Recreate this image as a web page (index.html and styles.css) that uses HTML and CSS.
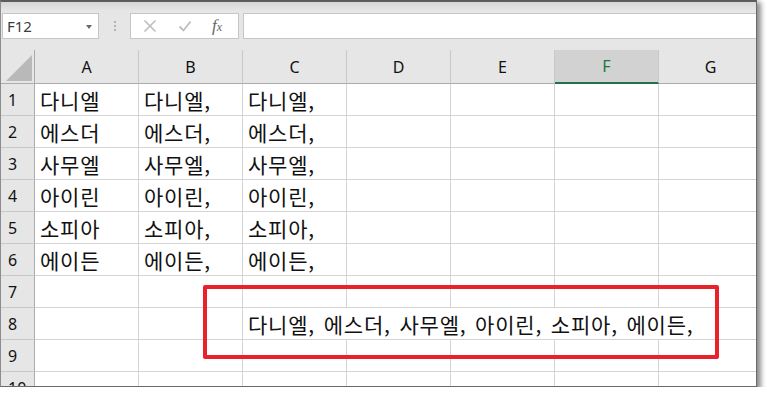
FILE: index.html
```html
<!DOCTYPE html>
<html lang="ko">
<head>
    <meta charset="UTF-8">
    <title>Excel - 텍스트 합치기</title>
    <link rel="stylesheet" href="styles.css">
</head>
<body>
    <div class="window">
        <div class="formula-bar">
            <div class="name-box"><span>F12</span><i class="caret"></i></div>
            <div class="grip"><i></i><i></i><i></i></div>
            <div class="fx-buttons">
                <svg class="ico" width="14" height="14" viewBox="0 0 14 14"><path d="M1.5 1.5L12.5 12.5M12.5 1.5L1.5 12.5" stroke="#bdbdbd" stroke-width="1.6" fill="none"/></svg>
                <svg class="ico" width="14" height="14" viewBox="0 0 14 14"><path d="M1.5 7.5L5.5 11.5L12.5 2.5" stroke="#bdbdbd" stroke-width="1.8" fill="none"/></svg>
                <span class="fx">f<small>x</small></span>
            </div>
            <div class="formula-input"></div>
        </div>
        <div class="sheet">
            <div class="corner"><svg width="34" height="34" viewBox="0 0 34 34"><polygon points="31,5 31,31 5,31" fill="#b9b9b9"/></svg></div>
            <div class="col-head">A</div>
            <div class="col-head">B</div>
            <div class="col-head">C</div>
            <div class="col-head">D</div>
            <div class="col-head">E</div>
            <div class="col-head on">F</div>
            <div class="col-head">G</div>

            <div class="row-head">1</div><div class="cell">다니엘</div><div class="cell">다니엘,</div><div class="cell">다니엘,</div><div class="cell"></div><div class="cell"></div><div class="cell"></div><div class="cell"></div>
            <div class="row-head">2</div><div class="cell">에스더</div><div class="cell">에스더,</div><div class="cell">에스더,</div><div class="cell"></div><div class="cell"></div><div class="cell"></div><div class="cell"></div>
            <div class="row-head">3</div><div class="cell">사무엘</div><div class="cell">사무엘,</div><div class="cell">사무엘,</div><div class="cell"></div><div class="cell"></div><div class="cell"></div><div class="cell"></div>
            <div class="row-head">4</div><div class="cell">아이린</div><div class="cell">아이린,</div><div class="cell">아이린,</div><div class="cell"></div><div class="cell"></div><div class="cell"></div><div class="cell"></div>
            <div class="row-head">5</div><div class="cell">소피아</div><div class="cell">소피아,</div><div class="cell">소피아,</div><div class="cell"></div><div class="cell"></div><div class="cell"></div><div class="cell"></div>
            <div class="row-head">6</div><div class="cell">에이든</div><div class="cell">에이든,</div><div class="cell">에이든,</div><div class="cell"></div><div class="cell"></div><div class="cell"></div><div class="cell"></div>
            <div class="row-head">7</div><div class="cell"></div><div class="cell"></div><div class="cell"></div><div class="cell"></div><div class="cell"></div><div class="cell"></div><div class="cell"></div>
            <div class="row-head">8</div><div class="cell"></div><div class="cell"></div><div class="cell span5">다니엘, 에스더, 사무엘, 아이린, 소피아, 에이든,</div>
            <div class="row-head">9</div><div class="cell"></div><div class="cell"></div><div class="cell"></div><div class="cell"></div><div class="cell"></div><div class="cell"></div><div class="cell"></div>
            <div class="row-head">10</div><div class="cell"></div><div class="cell"></div><div class="cell"></div><div class="cell"></div><div class="cell"></div><div class="cell"></div><div class="cell"></div>

            <div class="callout"></div>
        </div>
    </div>
</body>
</html>
```
FILE: styles.css
```css
* { margin: 0; padding: 0; box-sizing: border-box; }
body { background: #fff; font-family: "Noto Sans", "Noto Sans CJK KR", sans-serif; }

.window { width: 757px; height: 387px; border-top: 2px solid #5c5c5c; border-left: 1px solid #8c8c8c; border-right: 1px solid #6a6a6a; border-bottom: 1px solid #6a6a6a; overflow: hidden; box-shadow: 3px 3px 5px 1px rgba(0,0,0,.45); background: #fff; }

/* formula bar */
.formula-bar { height: 48px; display: flex; align-items: flex-start; padding: 11px 0 0 1px; background: linear-gradient(#d6d6d6, #e6e6e6 9px); }
.name-box { width: 97px; height: 26px; background: #fff; border: 1px solid #c6c6c6; display: flex; align-items: center; justify-content: space-between; padding: 0 6px 0 4px; font-size: 15px; color: #3c3c3c; }
.caret { width: 0; height: 0; border-left: 3.5px solid transparent; border-right: 3.5px solid transparent; border-top: 4px solid #6a6a6a; margin-top: 1px; }
.grip { width: 31px; height: 26px; display: flex; flex-direction: column; align-items: center; justify-content: center; gap: 2px; }
.grip i { width: 2px; height: 2px; background: #b3b3b3; }
.fx-buttons { width: 109px; height: 26px; background: #fff; border: 1px solid #c6c6c6; display: flex; align-items: center; padding: 0 0 0 12px; }
.fx-buttons .ico { margin-right: 21px; }
.fx { font-family: "Liberation Serif", serif; font-style: italic; font-size: 17px; color: #666; margin-left: -1px; }
.fx small { font-size: 12px; }
.formula-input { flex: 1; height: 26px; margin-left: 4px; background: #fff; border: 1px solid #c6c6c6; border-right: 0; }

/* sheet grid */
.sheet { position: relative; display: grid; grid-template-columns: 34px repeat(7, 104px); grid-template-rows: 34px; grid-auto-rows: 32px; }
.corner { background: #e6e6e6; border-right: 1px solid #ababab; border-bottom: 1px solid #ababab; }
.corner svg { display: block; }
.col-head { background: #e6e6e6; border-right: 1px solid #c8c8c8; border-bottom: 1px solid #ababab; display: flex; align-items: center; justify-content: center; font-size: 16px; color: #111; }
.col-head.on { background: #d2d2d2; color: #217346; border-bottom: 2px solid #217346; }
.row-head { background: #e6e6e6; border-right: 1px solid #ababab; border-bottom: 1px solid #c8c8c8; display: flex; align-items: center; padding-left: 7px; font-size: 16px; color: #111; }
.cell { border-right: 1px solid #d4d4d4; border-bottom: 1px solid #d4d4d4; display: flex; align-items: center; padding-left: 5px; font-family: "Noto Sans CJK KR", sans-serif; font-size: 21px; letter-spacing: 0.8px; word-spacing: 2px; color: #111; white-space: nowrap; }
.cell.span5 { grid-column: span 5; }

.callout { position: absolute; left: 202px; top: 235px; width: 516px; height: 74px; border: 4px solid #e8212a; border-radius: 2px; }
```
